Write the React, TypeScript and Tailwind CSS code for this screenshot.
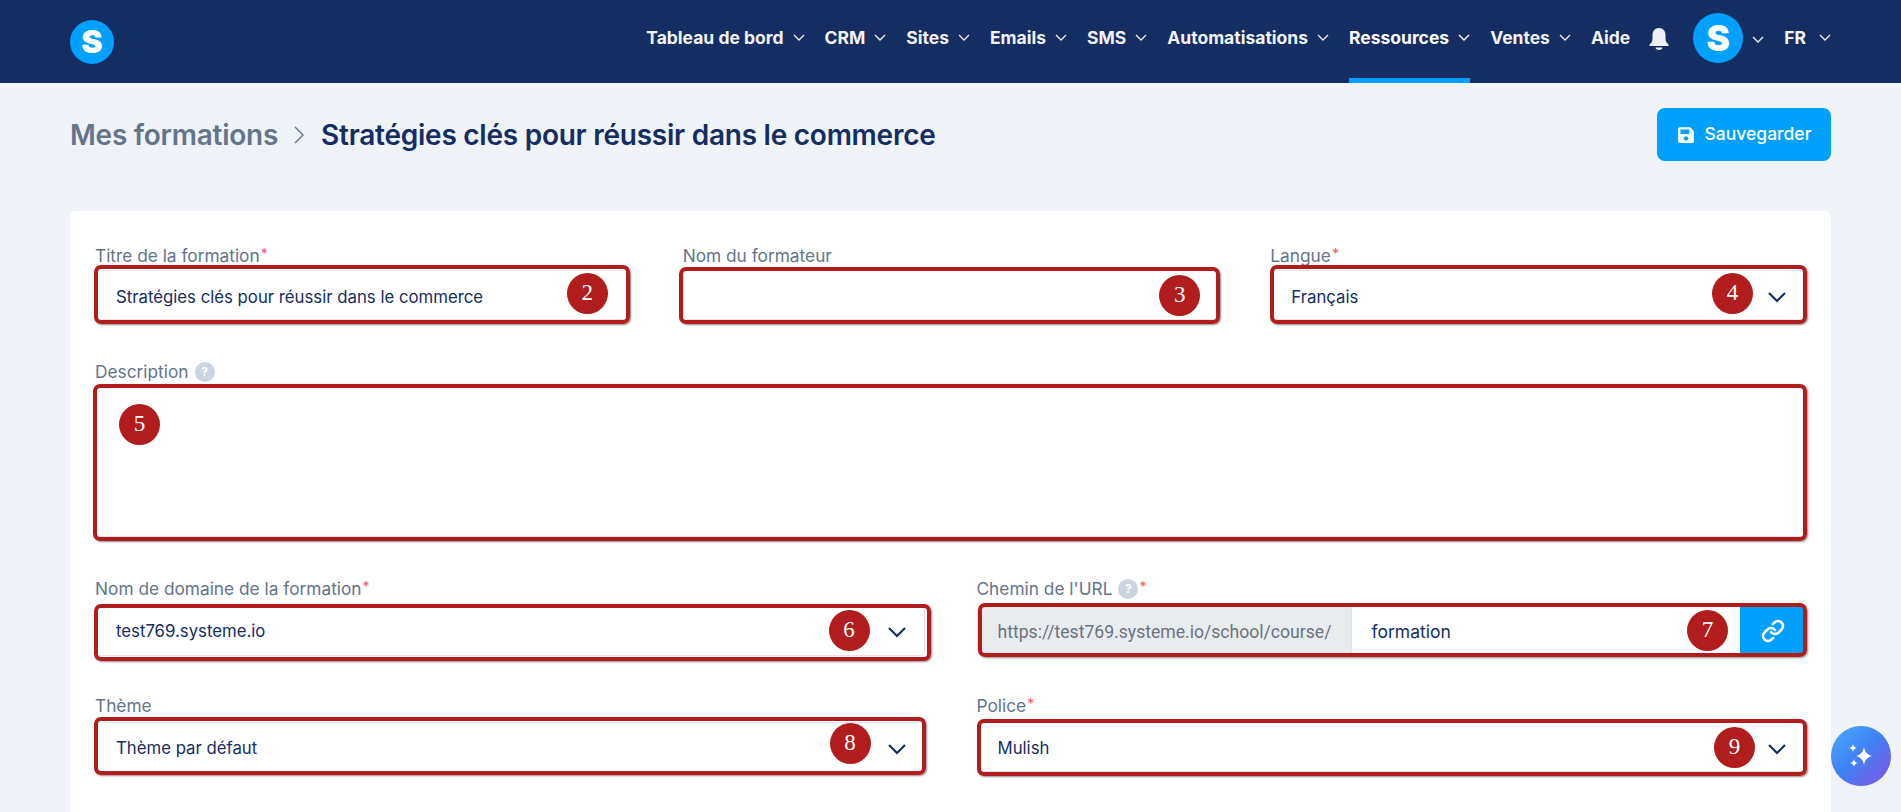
import React from "react";
import { Link } from "lucide-react";
import { FaSave } from "react-icons/fa";

const NAV = [
  { t: "Tableau de bord", c: true },
  { t: "CRM", c: true },
  { t: "Sites", c: true },
  { t: "Emails", c: true },
  { t: "SMS", c: true },
  { t: "Automatisations", c: true },
  { t: "Ressources", c: true, a: true },
  { t: "Ventes", c: true },
  { t: "Aide", c: false },
];

function Chevron({ className }: { className: string }) {
  return (
    <svg viewBox="0 0 12 7" fill="none" stroke="currentColor" strokeWidth="1.3" className={className}>
      <path d="M1 1l5 5 5-5" />
    </svg>
  );
}

function BigChevron() {
  return (
    <svg viewBox="0 0 18 11" fill="none" stroke="#142d63" strokeWidth="2.2" className="w-[18px] h-[11px]">
      <path d="M1 1l8 8 8-8" />
    </svg>
  );
}

function Help() {
  return (
    <span className="inline-flex w-[20px] h-[20px] rounded-full bg-[#cbd5e1] text-white text-[12px] font-bold items-center justify-center ml-[6px]">?</span>
  );
}

function Label({ text, req, help, cls }: { text: string; req?: boolean; help?: boolean; cls?: string }) {
  return (
    <div className={`flex items-center h-[24px] text-[17.3px] leading-[24px] text-[#64748b] font-normal ${cls ?? "pt-[2px]"}`}>
      <span>{text}</span>
      {help && <Help />}
      {req && <span className="text-[#f0566a] text-[14px] ml-[1px] -mt-[4px]">*</span>}
    </div>
  );
}

function Mark({ n, box, badge }: { n: number; box: string; badge: string }) {
  return (
    <>
      <div className={`absolute border-[4px] border-[#b11c1c] rounded-[7px] shadow-[1px_1px_2px_rgba(0,0,0,0.45)] pointer-events-none ${box}`} />
      <div className={`absolute w-[41px] h-[41px] rounded-full bg-[#b11c1c] text-white flex items-center justify-center text-[23px] font-['Liberation_Serif',serif] ${badge}`}>{n}</div>
    </>
  );
}

function Input({ value, select, h, top, cls }: { value?: string; select?: boolean; h?: string; top?: boolean; cls?: string }) {
  return (
    <div className={`bg-white border border-[#e2e4e8] rounded-[5px] flex justify-between pl-[20px] text-[16.75px] text-[#142d63] ${h ?? "h-[50px]"} ${top ? "" : "items-center"} ${cls ?? "pr-[18px]"}`}>
      <span>{value}</span>
      {select && <BigChevron />}
    </div>
  );
}

export default function App() {
  return (
    <div className="h-[812px] overflow-hidden bg-[#f0f3f8] font-['Inter',sans-serif] flex flex-col">
      <header className="h-[83px] shrink-0 bg-[#142d63] flex items-center justify-between pl-[70px] pr-[70px] text-[#f1f3f6]">
        <div className="w-[44px] h-[44px] rounded-full bg-[#00a0ff] flex items-center justify-center text-white text-[32px] font-black leading-none">S</div>
        <nav className="flex items-stretch h-full gap-[20px] text-[17.5px] font-bold">
          {NAV.map((n) => (
            <div key={n.t} className={`flex items-center pb-[1px] border-b-[5px] ${n.a ? "border-[#00a0ff] text-white" : "border-transparent"}`}>
              <span>{n.t}</span>
              {n.c && <Chevron className="w-[12px] h-[7px] ml-[9px] -mt-[3px]" />}
            </div>
          ))}
          <div className="flex items-center -mx-[2px]">
            <svg viewBox="0 0 20 24" className="w-[20px] h-[24px] fill-[#eceff3] -mt-[5px] ml-[1px]">
              <path d="M10 1c-4 0-6.500 3-6.500 7v4c0 2-1 4-3 5.500V19h19v-1.500c-2-1.500-3-3.500-3-5.500V8c0-4-2.500-7-6.500-7zM6.500 20.500h7c0 1.500-1.500 2.500-3.500 2.500s-3.500-1-3.500-2.500z" />
            </svg>
          </div>
          <div className="flex items-center ml-[6px]">
            <div className="w-[50px] h-[50px] rounded-full bg-[#00a0ff] flex items-center justify-center text-white text-[35px] font-black leading-none -mt-[7px]">S</div>
            <Chevron className="w-[12px] h-[7px] ml-[9px] -mt-[5px]" />
          </div>
          <div className="flex items-center pb-[6px]">
            <span>FR</span>
            <Chevron className="w-[12px] h-[7px] ml-[13px] -mt-[3px]" />
          </div>
        </nav>
      </header>

      <main className="flex-1 px-[70px]">
        <div className="flex items-center justify-between mt-[25px] h-[53px]">
          <div className="flex items-center text-[28px] font-semibold tracking-[-0.25px]">
            <span className="text-[#64748b]">Mes formations</span>
            <svg viewBox="0 0 10 18" fill="none" stroke="#64748b" strokeWidth="1.4" className="w-[10px] h-[18px] ml-[16px] mr-[17px]">
              <path d="M1 1l8 8-8 8" />
            </svg>
            <span className="text-[#142d63]">Stratégies clés pour réussir dans le commerce</span>
          </div>
          <button className="h-[53px] w-[174px] rounded-[8px] bg-[#00a0ff] text-white text-[17.5px] font-medium flex items-center justify-center gap-[10px]">
            <FaSave className="w-[18px] h-[18px]" />
            Sauvegarder
          </button>
        </div>

        <section className="mt-[50px] h-[620px] bg-white rounded-[6px] px-[25px] pt-[31px]">
          <div className="grid grid-cols-3 gap-x-[52px]">
            <div>
              <Label text="Titre de la formation" req cls="pt-[4px]" />
              <div className="relative mt-[4px]">
                <Input value="Stratégies clés pour réussir dans le commerce" cls="pt-[6px]" />
                <Mark n={2} box="-left-[1px] right-[1px] -top-[5px] -bottom-[4px]" badge="right-[23px] top-[3px]" />
              </div>
            </div>
            <div>
              <Label text="Nom du formateur" cls="pt-[4px]" />
              <div className="relative mt-[4px]">
                <Input />
                <Mark n={3} box="-left-[4px] -right-[2px] -top-[3px] -bottom-[4px]" badge="right-[18px] top-[5px]" />
              </div>
            </div>
            <div>
              <Label text="Langue" req cls="pt-[4px]" />
              <div className="relative mt-[4px]">
                <Input value="Français" select cls="pt-[5px] pr-[19px]" />
                <Mark n={4} box="left-0 -right-[1px] -top-[5px] -bottom-[4px]" badge="right-[53px] top-[3px]" />
              </div>
            </div>
          </div>

          <div className="mt-[39px]">
            <Label text="Description" help />
            <div className="relative mt-[4px]">
              <Input h="h-[150px]" top />
              <Mark n={5} box="-left-[2px] -right-[1px] -top-[3px] -bottom-[4px]" badge="left-[24px] top-[17px]" />
            </div>
          </div>

          <div className="grid grid-cols-2 gap-x-[52px] mt-[39px]">
            <div>
              <Label text="Nom de domaine de la formation" req />
              <div className="relative mt-[6px]">
                <Input value="test769.systeme.io" select cls="pt-[2px] pr-[18px]" />
                <Mark n={6} box="-left-[1px] -right-[6px] -top-[2px] -bottom-[5px]" badge="right-[55px] top-[4px]" />
              </div>
            </div>
            <div>
              <Label text="Chemin de l'URL" req help />
              <div className="relative mt-[6px]">
                <div className="h-[50px] flex rounded-[5px] overflow-hidden border border-[#e2e4e8] text-[17.5px]">
                  <div className="w-[374px] bg-[#e9ecef] border-r border-[#dfe2e6] flex items-center pt-[2px] pl-[20px] text-[#6b7280] font-['Roboto',sans-serif] text-[17.6px] whitespace-nowrap">https://test769.systeme.io/school/course/</div>
                  <div className="flex-1 bg-white flex items-center pt-[2px] pl-[20px] text-[#142d63]">formation</div>
                  <div className="w-[65px] bg-[#00a0ff] flex items-center justify-center text-white">
                    <Link className="w-[24px] h-[24px]" strokeWidth={2.6} />
                  </div>
                </div>
                <Mark n={7} box="left-[1px] -right-[1px] -top-[3px] -bottom-[1px]" badge="right-[78px] top-[4px]" />
              </div>
            </div>
          </div>

          <div className="grid grid-cols-2 gap-x-[52px] mt-[37px]">
            <div>
              <Label text="Thème" />
              <div className="relative mt-[5px]">
                <Input value="Thème par défaut" select cls="pt-[4px] pr-[18px]" />
                <Mark n={8} box="-left-[1px] -right-[1px] -top-[5px] -bottom-[3px]" badge="right-[54px] top-[1px]" />
              </div>
            </div>
            <div>
              <Label text="Police" req />
              <div className="relative mt-[5px]">
                <Input value="Mulish" select cls="pt-[4px] pr-[19px]" />
                <Mark n={9} box="left-0 -right-[1px] -top-[3px] -bottom-[4px]" badge="right-[51px] top-[5px]" />
              </div>
            </div>
          </div>
        </section>
      </main>

      <button className="absolute left-[1831px] top-[726px] w-[60px] h-[60px] rounded-full bg-gradient-to-br from-[#4aa8f8] via-[#3f7ff5] to-[#7a4fe0] flex items-center justify-center">
        <svg viewBox="0 0 30 30" className="w-[30px] h-[30px] fill-white">
          <path d="M18 6c1 5 3 7.500 8 9-5 1.500-7 4-8 9-1-5-3-7.500-8-9 5-1.500 7-4 8-9z" />
          <path d="M7 3c.5 2.500 1.500 3.500 4 4-2.500.5-3.500 1.500-4 4-.5-2.500-1.500-3.500-4-4 2.500-.5 3.500-1.500 4-4z" />
          <path d="M8 18c.5 2.500 1.500 3.500 4 4-2.500.5-3.500 1.500-4 4-.5-2.500-1.500-3.500-4-4 2.500-.5 3.500-1.500 4-4z" />
        </svg>
      </button>
    </div>
  );
}
